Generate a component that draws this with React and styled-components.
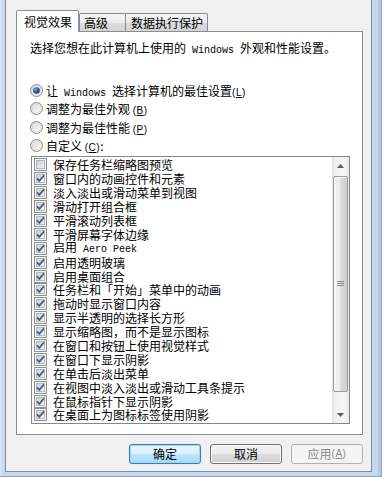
import React from "react";
import styled, { createGlobalStyle } from "styled-components";

const options = [
  { text: "保存任务栏缩略图预览", checked: false },
  { text: "窗口内的动画控件和元素", checked: true },
  { text: "淡入淡出或滑动菜单到视图", checked: true },
  { text: "滑动打开组合框", checked: true },
  { text: "平滑滚动列表框", checked: true },
  { text: "平滑屏幕字体边缘", checked: true },
  { text: "启用", latin: " Aero Peek", checked: true },
  { text: "启用透明玻璃", checked: true },
  { text: "启用桌面组合", checked: true },
  { text: "任务栏和「开始」菜单中的动画", checked: true },
  { text: "拖动时显示窗口内容", checked: true },
  { text: "显示半透明的选择长方形", checked: true },
  { text: "显示缩略图，而不是显示图标", checked: true },
  { text: "在窗口和按钮上使用视觉样式", checked: true },
  { text: "在窗口下显示阴影", checked: true },
  { text: "在单击后淡出菜单", checked: true },
  { text: "在视图中淡入淡出或滑动工具条提示", checked: true },
  { text: "在鼠标指针下显示阴影", checked: true },
  { text: "在桌面上为图标标签使用阴影", checked: true },
];

function RadioIcon({ on }) {
  return (
    <svg width="13" height="13" viewBox="0 0 13 13">
      <defs>
        <linearGradient id="rg" x1="0" y1="0" x2="1" y2="1">
          <stop offset="0" stopColor="#d6d6d6" />
          <stop offset="1" stopColor="#ffffff" />
        </linearGradient>
        <radialGradient id="rdot" cx="0.4" cy="0.35" r="0.7">
          <stop offset="0" stopColor="#8fb4e0" />
          <stop offset="0.5" stopColor="#2f5a9a" />
          <stop offset="1" stopColor="#1b3466" />
        </radialGradient>
      </defs>
      <circle cx="6.5" cy="6.5" r="6" fill="url(#rg)" stroke="#8c8c8c" />
      <circle cx="6.5" cy="6.5" r="4.5" fill="none" stroke="#dcdcdc" />
      {on && <circle cx="6.5" cy="6.5" r="3.3" fill="url(#rdot)" />}
    </svg>
  );
}

function CheckIcon({ on }) {
  return (
    <svg width="13" height="13" viewBox="0 0 13 13">
      <defs>
        <linearGradient id="cg" x1="0" y1="0" x2="1" y2="1">
          <stop offset="0" stopColor="#c9ced6" />
          <stop offset="1" stopColor="#f7f7f7" />
        </linearGradient>
      </defs>
      <rect x="0.5" y="0.5" width="12" height="12" fill="#f6f6f6" stroke="#8e8f8f" />
      <rect x="2.5" y="2.5" width="8" height="8" fill="url(#cg)" stroke="#b3b8be" />
      {on && (
        <path
          d="M3 6.3 L5.3 8.8 L10 3.4"
          fill="none"
          stroke="#4a5c86"
          strokeWidth="1.8"
        />
      )}
    </svg>
  );
}

function Key({ k }) {
  return (
    <Accel>
      (<u>{k}</u>)
    </Accel>
  );
}

export default function App() {
  return (
    <>
      <GlobalStyle />
      <Frame>
        <Dialog>
          <TabRow>
            <Tab $active $w={63} $pl={7}>
              视觉效果
            </Tab>
            <Tab $w={47} $pl={4}>
              高级
            </Tab>
            <Tab $w={83} $pl={5} $ml={-1}>
              数据执行保护
            </Tab>
          </TabRow>

          <Panel>
            <Description>
              选择您想在此计算机上使用的<Mono> Windows </Mono>外观和性能设置。
            </Description>

            <RadioGroup>
              <RadioRow>
                <RadioIcon on />
                <span>
                  让<Mono> Windows </Mono>选择计算机的最佳设置
                  <Key k="L" />
                </span>
              </RadioRow>
              <RadioRow>
                <RadioIcon />
                <span>
                  调整为最佳外观 <Key k="B" />
                </span>
              </RadioRow>
              <RadioRow>
                <RadioIcon />
                <span>
                  调整为最佳性能 <Key k="P" />
                </span>
              </RadioRow>
              <RadioRow>
                <RadioIcon />
                <span>
                  自定义 <Key k="C" />:
                </span>
              </RadioRow>
            </RadioGroup>

            <ListBox>
              <Items>
                {options.map((o) => (
                  <CheckRow key={o.text + (o.latin || "")}>
                    <CheckIcon on={o.checked} />
                    <span>
                      {o.text}
                      {o.latin && <Mono>{o.latin}</Mono>}
                    </span>
                  </CheckRow>
                ))}
              </Items>
              <ScrollBar>
                <ArrowBtn>
                  <svg width="7" height="4" viewBox="0 0 7 4">
                    <path d="M0 4 L3.5 0 L7 4 Z" fill="#5a5a5a" />
                  </svg>
                </ArrowBtn>
                <Track>
                  <Thumb>
                    <svg width="7" height="6" viewBox="0 0 7 6">
                      <path d="M0 0.5 H7 M0 2.5 H7 M0 4.5 H7" stroke="#8a8a8a" />
                    </svg>
                  </Thumb>
                </Track>
                <ArrowBtn>
                  <svg width="7" height="4" viewBox="0 0 7 4">
                    <path d="M0 0 L3.5 4 L7 0 Z" fill="#5a5a5a" />
                  </svg>
                </ArrowBtn>
              </ScrollBar>
            </ListBox>
          </Panel>

          <ButtonRow>
            <Button $variant="default">确定</Button>
            <Button>取消</Button>
            <Button $variant="disabled">
              应用 <Key k="A" />
            </Button>
          </ButtonRow>
        </Dialog>
      </Frame>
    </>
  );
}

const GlobalStyle = createGlobalStyle`
  html, body {
    margin: 0;
    padding: 0;
  }
  body {
    width: 382px;
    height: 477px;
    overflow: hidden;
    font-family: "Noto Sans CJK SC", "Liberation Sans", sans-serif;
    font-size: 12px;
    color: #000;
  }
`;

const Frame = styled.div`
  width: 382px;
  height: 477px;
  box-sizing: border-box;
  display: flex;
  padding: 0 10px 5px 5px;
  background: linear-gradient(90deg, #dfe9f5 0, #c6d8ee 3px, #c6d8ee 100%);
  box-shadow: inset -1px -1px 0 #8ea5c2, inset -4px 0 0 #b4c9e4;
`;

const Dialog = styled.div`
  flex: 1;
  display: flex;
  flex-direction: column;
  box-sizing: border-box;
  background: #f0f0f0;
  border: 1px solid #7d8da3;
  border-top: none;
  padding: 10px 7px 0 10px;
`;

const TabRow = styled.div`
  display: flex;
  align-items: flex-end;
  height: 22px;
  position: relative;
  z-index: 1;
`;

const Tab = styled.div`
  box-sizing: border-box;
  display: flex;
  align-items: center;
  width: ${(p) => p.$w}px;
  height: ${(p) => (p.$active ? 22 : 18)}px;
  margin-bottom: ${(p) => (p.$active ? 0 : 1)}px;
  margin-left: ${(p) => p.$ml || 0}px;
  padding-left: ${(p) => p.$pl}px;
  border: 1px solid #898c95;
  border-bottom: none;
  border-radius: 2px 2px 0 0;
  background: ${(p) =>
    p.$active
      ? "#fff"
      : "linear-gradient(#f4f4f4, #ebebeb 50%, #dcdcdc 51%, #d4d4d4)"};
  line-height: 14px;
  white-space: nowrap;
`;

const Panel = styled.div`
  box-sizing: border-box;
  display: flex;
  flex-direction: column;
  width: 347px;
  height: 404px;
  margin-top: -1px;
  background: #fff;
  border: 1px solid #898c95;
  padding: 9px 12px 0 13px;
`;

const Description = styled.div`
  line-height: 14px;
  white-space: nowrap;
`;

const Mono = styled.span`
  font-family: "Liberation Mono", monospace;
  font-size: 10px;
  white-space: pre;
`;

const Accel = styled.span`
  font-family: "Liberation Sans", sans-serif;
  font-size: 10px;
  letter-spacing: 0.5px;
  u {
    text-decoration: underline;
  }
`;

const RadioGroup = styled.div`
  display: flex;
  flex-direction: column;
  margin-top: 23px;
`;

const RadioRow = styled.div`
  display: flex;
  align-items: center;
  gap: 3px;
  height: 18.5px;
  white-space: nowrap;
`;

const ListBox = styled.div`
  box-sizing: border-box;
  display: flex;
  height: 268px;
  margin: 1px 0 0 1px;
  border: 1px solid #828790;
  background: #fff;
`;

const Items = styled.div`
  flex: 1;
  display: flex;
  flex-direction: column;
  padding-top: 1px;
  overflow: hidden;
`;

const CheckRow = styled.div`
  display: flex;
  align-items: center;
  gap: 6px;
  height: 13.9px;
  padding-left: 2px;
  line-height: 13px;
  white-space: nowrap;
`;

const ScrollBar = styled.div`
  width: 17px;
  display: flex;
  flex-direction: column;
  background: linear-gradient(90deg, #e3e3e3, #f2f2f2 20%, #f4f4f4 80%, #e8e8e8);
`;

const ArrowBtn = styled.div`
  height: 17px;
  display: flex;
  align-items: center;
  justify-content: center;
`;

const Track = styled.div`
  flex: 1;
  display: flex;
  flex-direction: column;
`;

const Thumb = styled.div`
  box-sizing: border-box;
  height: 216px;
  margin: 2px 1px 0 1px;
  border: 1px solid #9b9b9b;
  border-radius: 2px;
  background: linear-gradient(90deg, #f3f3f3, #e9e9e9 45%, #d9d9d9 55%, #cfcfcf);
  box-shadow: inset 1px 1px 0 #fbfbfb;
  display: flex;
  align-items: center;
  justify-content: center;
`;

const ButtonRow = styled.div`
  display: flex;
  justify-content: flex-end;
  gap: 9px;
  margin-top: 9px;
  width: 347px;
`;

const Button = styled.div`
  box-sizing: border-box;
  width: 72px;
  height: 20px;
  display: flex;
  align-items: center;
  justify-content: center;
  border-radius: 3px;
  line-height: 14px;
  white-space: nowrap;
  color: ${(p) => (p.$variant === "disabled" ? "#8a8a8a" : "#000")};
  border: 1px solid
    ${(p) =>
      p.$variant === "default"
        ? "#3c7fb1"
        : p.$variant === "disabled"
        ? "#adb2b5"
        : "#707070"};
  background: ${(p) =>
    p.$variant === "default"
      ? "linear-gradient(#eaf6fd, #d9f0fc 50%, #bee6fd 51%, #a7d9f5)"
      : p.$variant === "disabled"
      ? "#f4f4f4"
      : "linear-gradient(#f2f2f2, #ebebeb 50%, #dddddd 51%, #cfcfcf)"};
  box-shadow: ${(p) =>
    p.$variant === "default"
      ? "inset 0 0 0 1px #9fd6f5, 0 0 1px #7fc2ea"
      : p.$variant === "disabled"
      ? "none"
      : "inset 0 0 0 1px #fcfcfc"};
`;
